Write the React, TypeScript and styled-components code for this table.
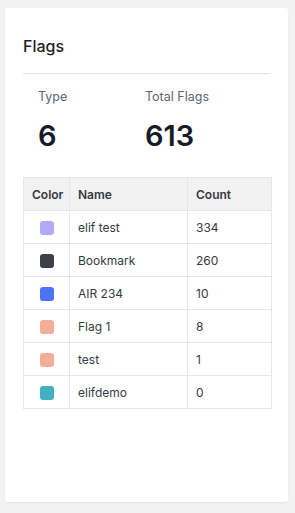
import styled, { createGlobalStyle } from 'styled-components'

const GlobalStyle = createGlobalStyle`
  html, body {
    margin: 0;
    padding: 0;
    background: #f2f2f2;
  }
  body {
    font-family: Inter, "Liberation Sans", sans-serif;
  }
`

const Page = styled.div`
  padding: 8px 7px 11px 5px;
  height: 513px;
  box-sizing: border-box;
`

const Card = styled.div`
  background: #fff;
  border-radius: 3px;
  box-shadow: 0 1px 2px rgba(0, 0, 0, 0.06);
  height: 100%;
  box-sizing: border-box;
  padding: 28px 18px 0 18px;
`

const Title = styled.h2`
  margin: 0;
  font-size: 16px;
  font-weight: 500;
  color: #1f1f1f;
  line-height: 20px;
  padding-bottom: 17px;
  border-bottom: 1px solid #e2e3e6;
`

const Stats = styled.div`
  display: grid;
  grid-template-columns: 107px 1fr;
  padding: 15px 15px 0;
`

const Stat = styled.div`
  display: flex;
  flex-direction: column;
`

const StatLabel = styled.span`
  font-size: 12.5px;
  color: #5b6478;
  line-height: 16px;
`

const StatValue = styled.span`
  font-size: 29px;
  font-weight: 600;
  color: #151b28;
  line-height: 34px;
  margin-top: 14px;
`

const Table = styled.table`
  margin-top: 24px;
  width: 248px;
  border-collapse: collapse;
  font-size: 12px;
  color: #363a42;
  table-layout: fixed;
`

const Th = styled.th<{ $w: number }>`
  width: ${({ $w }) => $w}px;
  background: #f2f2f2;
  border: 1px solid #e6e6e6;
  text-align: left;
  font-weight: 600;
  height: 33px;
  padding: 0 8px;
  box-sizing: border-box;
`

const Td = styled.td<{ $center?: boolean }>`
  border: 1px solid #e6e6e6;
  height: 33px;
  padding: 0 8px;
  box-sizing: border-box;
  text-align: ${({ $center }) => ($center ? 'center' : 'left')};
  vertical-align: middle;
`

const Swatch = styled.span<{ $color: string }>`
  display: inline-block;
  width: 14px;
  height: 14px;
  border-radius: 3px;
  background: ${({ $color }) => $color};
  vertical-align: middle;
`

const flags = [
  { color: '#b1a9fa', name: 'elif test', count: 334 },
  { color: '#3d4047', name: 'Bookmark', count: 260 },
  { color: '#4a73f5', name: 'AIR 234', count: 10 },
  { color: '#f4ae98', name: 'Flag 1', count: 8 },
  { color: '#f4ae98', name: 'test', count: 1 },
  { color: '#41b0c2', name: 'elifdemo', count: 0 },
]

const App = () => {
  const total = flags.reduce((sum, f) => sum + f.count, 0)

  return (
    <>
      <GlobalStyle />
      <Page>
        <Card>
          <Title>Flags</Title>
          <Stats>
            <Stat>
              <StatLabel>Type</StatLabel>
              <StatValue>{flags.length}</StatValue>
            </Stat>
            <Stat>
              <StatLabel>Total Flags</StatLabel>
              <StatValue>{total}</StatValue>
            </Stat>
          </Stats>
          <Table>
            <thead>
              <tr>
                <Th $w={46}>Color</Th>
                <Th $w={118}>Name</Th>
                <Th $w={84}>Count</Th>
              </tr>
            </thead>
            <tbody>
              {flags.map((f) => (
                <tr key={f.name}>
                  <Td $center>
                    <Swatch $color={f.color} />
                  </Td>
                  <Td>{f.name}</Td>
                  <Td>{f.count}</Td>
                </tr>
              ))}
            </tbody>
          </Table>
        </Card>
      </Page>
    </>
  )
}

export default App
